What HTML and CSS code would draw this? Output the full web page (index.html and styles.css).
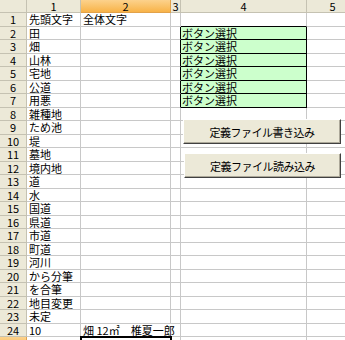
FILE: index.html
```html
<!DOCTYPE html>
<html lang="ja">
<head>
    <meta charset="UTF-8">
    <title>定義シート</title>
    <link rel="stylesheet" href="styles.css">
</head>
<body>
    <div class="sheet">
        <div class="row head">
            <div class="corner"></div>
            <div class="ch">1</div>
            <div class="ch sel">2</div>
            <div class="ch">3</div>
            <div class="ch">4</div>
            <div class="ch">5</div>
        </div>
        <div class="row"><div class="rh">1</div><div class="c">先頭文字</div><div class="c">全体文字</div><div class="c"></div><div class="c edge"></div><div class="c"></div></div>
        <div class="row pick"><div class="rh">2</div><div class="c">田</div><div class="c"></div><div class="c"></div><div class="c choice">ボタン選択</div><div class="c"></div></div>
        <div class="row pick"><div class="rh">3</div><div class="c">畑</div><div class="c"></div><div class="c"></div><div class="c choice">ボタン選択</div><div class="c"></div></div>
        <div class="row pick"><div class="rh">4</div><div class="c">山林</div><div class="c"></div><div class="c"></div><div class="c choice">ボタン選択</div><div class="c"></div></div>
        <div class="row pick"><div class="rh">5</div><div class="c">宅地</div><div class="c"></div><div class="c"></div><div class="c choice">ボタン選択</div><div class="c"></div></div>
        <div class="row pick"><div class="rh">6</div><div class="c">公道</div><div class="c"></div><div class="c"></div><div class="c choice">ボタン選択</div><div class="c"></div></div>
        <div class="row pick"><div class="rh">7</div><div class="c">用悪</div><div class="c"></div><div class="c"></div><div class="c choice">ボタン選択</div><div class="c"></div></div>
        <div class="row"><div class="rh">8</div><div class="c">雑種地</div><div class="c"></div><div class="c"></div><div class="c"></div><div class="c"></div></div>
        <div class="row"><div class="rh">9</div><div class="c">ため池</div><div class="c"></div><div class="c"></div><div class="c"></div><div class="c"></div></div>
        <div class="row"><div class="rh">10</div><div class="c">堤</div><div class="c"></div><div class="c"></div><div class="c"></div><div class="c"></div></div>
        <div class="row"><div class="rh">11</div><div class="c">墓地</div><div class="c"></div><div class="c"></div><div class="c"></div><div class="c"></div></div>
        <div class="row"><div class="rh">12</div><div class="c">境内地</div><div class="c"></div><div class="c"></div><div class="c"></div><div class="c"></div></div>
        <div class="row"><div class="rh">13</div><div class="c">道</div><div class="c"></div><div class="c"></div><div class="c"></div><div class="c"></div></div>
        <div class="row"><div class="rh">14</div><div class="c">水</div><div class="c"></div><div class="c"></div><div class="c"></div><div class="c"></div></div>
        <div class="row"><div class="rh">15</div><div class="c">国道</div><div class="c"></div><div class="c"></div><div class="c"></div><div class="c"></div></div>
        <div class="row"><div class="rh">16</div><div class="c">県道</div><div class="c"></div><div class="c"></div><div class="c"></div><div class="c"></div></div>
        <div class="row"><div class="rh">17</div><div class="c">市道</div><div class="c"></div><div class="c"></div><div class="c"></div><div class="c"></div></div>
        <div class="row"><div class="rh">18</div><div class="c">町道</div><div class="c"></div><div class="c"></div><div class="c"></div><div class="c"></div></div>
        <div class="row"><div class="rh">19</div><div class="c">河川</div><div class="c"></div><div class="c"></div><div class="c"></div><div class="c"></div></div>
        <div class="row"><div class="rh">20</div><div class="c">から分筆</div><div class="c"></div><div class="c"></div><div class="c"></div><div class="c"></div></div>
        <div class="row"><div class="rh">21</div><div class="c">を合筆</div><div class="c"></div><div class="c"></div><div class="c"></div><div class="c"></div></div>
        <div class="row"><div class="rh">22</div><div class="c">地目変更</div><div class="c"></div><div class="c"></div><div class="c"></div><div class="c"></div></div>
        <div class="row"><div class="rh">23</div><div class="c">未定</div><div class="c"></div><div class="c"></div><div class="c"></div><div class="c"></div></div>
        <div class="row"><div class="rh">24</div><div class="c">10</div><div class="c spill"><span class="ul">畑 12㎡　椎夏一郎</span></div><div class="c"></div><div class="c"></div><div class="c"></div></div>
        <div class="row"><div class="rh sel">25</div><div class="c"></div><div class="c active"></div><div class="c"></div><div class="c"></div><div class="c"></div></div>
    </div>

    <button class="btn btn-write">定義ファイル書き込み</button>
    <button class="btn btn-read">定義ファイル読み込み</button>
</body>
</html>
```

FILE: styles.css
```css
* {
    margin: 0;
    padding: 0;
    box-sizing: border-box;
}

body {
    font-family: "Noto Sans CJK JP", "Noto Sans", sans-serif;
    font-size: 11px;
    color: #000;
    background: #fff;
    width: 345px;
    height: 340px;
    overflow: hidden;
    position: relative;
}

.sheet {
    width: 359px;
}

.row {
    display: grid;
    grid-template-columns: 27px 54px 90px 10px 126px 52px;
    height: 14px;
}

.row:nth-child(odd) {
    height: 13px;
}

.row > div {
    border-right: 1px solid #c8c8c8;
    border-bottom: 1px solid #c8c8c8;
    line-height: 12px;
    white-space: nowrap;
}

/* headers */
.head > div {
    background: #ece9d8;
    border-color: #c5c2b2;
    text-align: center;
    font-size: 11px;
    line-height: 12px;
}

.head .sel {
    background: linear-gradient(#fcd28c, #f8b348);
    border-color: #e2a24a;
}

.row .rh {
    background: #ece9d8;
    border-color: #c5c2b2;
    text-align: center;
    font-size: 11px;
}

.row .rh.sel {
    background: linear-gradient(#fcd28c, #f8b348);
    border-color: #e2a24a;
}

/* cells */
.c {
    padding-left: 2px;
}

.row .edge {
    border-bottom-color: #000;
}

.pick > div:nth-child(4) {
    border-right-color: #000;
}

.row .choice {
    background: #ccffcc;
    border-color: #000;
    padding-left: 1px;
}

.row .spill {
    border-right-color: transparent;
}

.ul {
    text-decoration: underline;
}

.row .active {
    outline: 2px solid #000;
    outline-offset: -1px;
}

/* buttons over the sheet */
.btn {
    position: absolute;
    height: 25px;
    background: #ece9d8;
    border: 1px solid;
    border-color: #fff #404040 #404040 #fff;
    box-shadow: inset -1px -1px 0 #aca899;
    font-family: "Noto Sans CJK JP", "Noto Sans", sans-serif;
    font-size: 11px;
    letter-spacing: -0.5px;
    color: #000;
}

.btn-write {
    left: 183px;
    top: 119px;
    width: 158px;
}

.btn-read {
    left: 184px;
    top: 153px;
    width: 157px;
}
```
